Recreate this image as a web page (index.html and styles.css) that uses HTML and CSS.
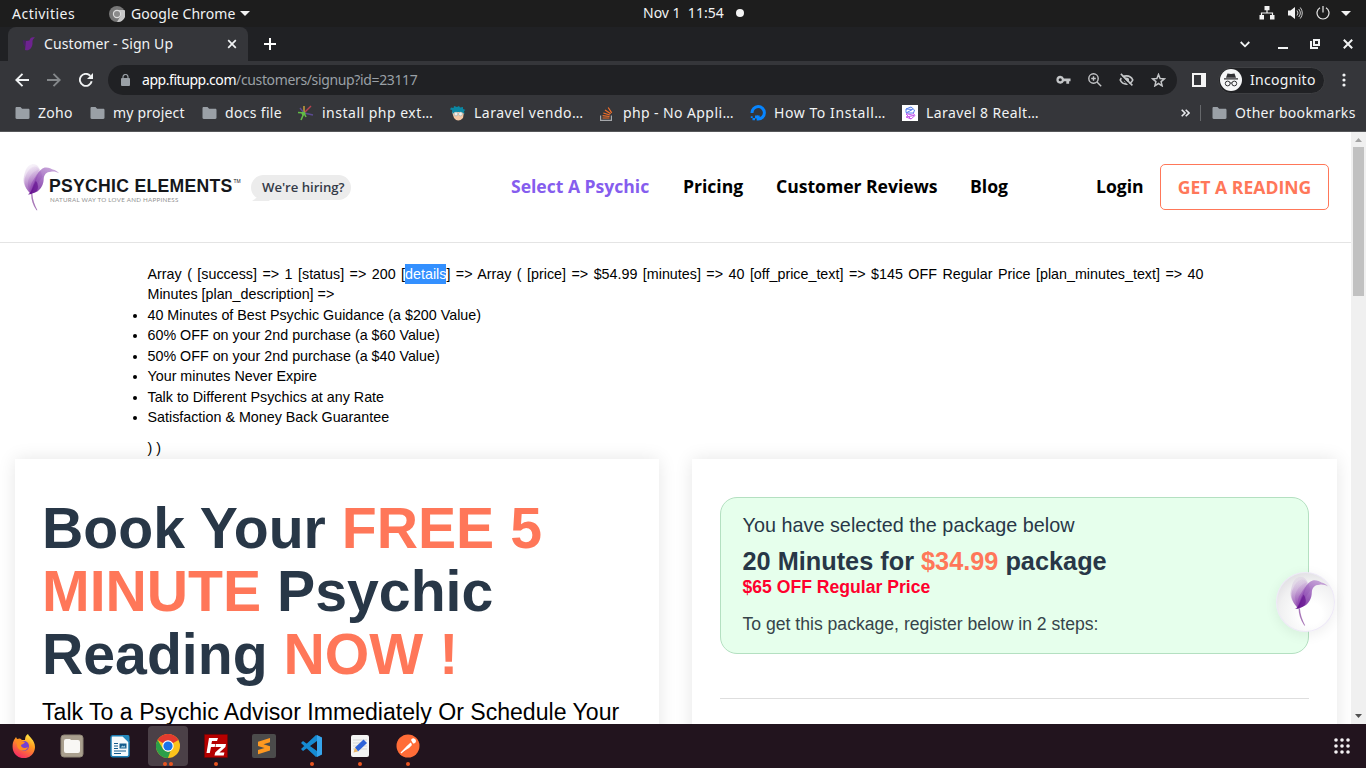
FILE: index.html
```html
<!DOCTYPE html>
<html lang="en">
<head>
<meta charset="utf-8">
<title>Customer - Sign Up</title>
<link rel="stylesheet" href="styles.css">
</head>
<body>
<svg class="defs" width="0" height="0" aria-hidden="true">
  <defs>
    <linearGradient id="violet" x1=".1" y1="1" x2=".7" y2="0"><stop offset="0" stop-color="#64108f"/><stop offset=".5" stop-color="#9150b5"/><stop offset="1" stop-color="#bd94d2"/></linearGradient>
    <linearGradient id="wing" x1=".6" y1="1" x2=".4" y2="0"><stop offset="0" stop-color="#7a24a0" stop-opacity=".6"/><stop offset="1" stop-color="#b78acb" stop-opacity=".08"/></linearGradient>
    <symbol id="folder" viewBox="0 0 14 12"><path d="M0 1.200C0 .5.5 0 1.200 0H5l1.600 1.700h6.200c.7 0 1.200.5 1.200 1.200v7.900c0 .7-.5 1.200-1.200 1.200H1.200C.5 12 0 11.500 0 10.800z" fill="#9aa0a6"/></symbol>
    <symbol id="bird" viewBox="150 52 118 153">
      <path d="M176 150C160 135 150 118 152 100 155 80 160 58 178 54c14-3 22 8 26 18z" fill="url(#wing)"/>
      <path d="M176 150C158 134 152 114 156 98c6-18 14-32 28-36 10-2 16 6 20 12z" fill="url(#wing)"/>
      <path d="M176 150C166 132 162 114 168 102c6-14 16-26 32-30z" fill="url(#wing)"/>
      <path d="M174 151C172 132 174 116 182 106c8-12 14-24 24-32l6 20z" fill="#8939ae" opacity=".4"/>
      <path d="M165 151C176 147 178 132 184 116 192 96 199 71 219 65 230 63 240 68 245 71 253 73 261 77 265 83 256 78 247 76 239 78 224 78 217 88 216 101 216 118 207 136 190 144 182 148 174 151 165 151z" fill="url(#violet)" opacity=".85"/>
      <path d="M170 151c10-12 13-30 21-44 9 12 10 29-2 37z" fill="#64108f" opacity=".65"/>
      <path d="M176 149c0 18 5 34 17 52l3 0c-9-18-15-33-16-52z" fill="#a878b8"/>
    </symbol>
  </defs>
</svg>
<div class="desktop">
  <header class="topbar">
    <span class="u activities">Activities</span>
    <svg class="top-chrome" width="16" height="16" viewBox="0 0 16 16"><circle cx="8" cy="8" r="8" fill="#777"/><path d="M8 4h7.500A8 8 0 0 1 8 16l3.500-6z" fill="#c7c7c7"/><circle cx="8" cy="8" r="4.200" fill="#ddd"/><circle cx="8" cy="8" r="3" fill="#8b8b8b"/></svg>
    <span class="u appname">Google Chrome</span>
    <svg class="app-caret" width="10" height="5" viewBox="0 0 10 5"><path d="M0 0h10L5 5z" fill="#f2f2f2"/></svg>
    <span class="u clock">Nov 1&nbsp; 11:54</span>
    <i class="notice-dot"></i>
    <div class="tray">
      <svg width="16" height="14" viewBox="0 0 16 14"><path d="M5.500 0h5v4.200h-5zM.500 9h4.500v4.500H.500zM11 9h4.500v4.500H11z" fill="#f2f2f2"/><path d="M8 4v3M2.500 9V7h11v2" fill="none" stroke="#f2f2f2" stroke-width="1.200"/></svg>
      <svg class="sound" width="16" height="14" viewBox="0 0 16 14"><path d="M0 4.500h2.500L7 1v12L2.500 9.500H0z" fill="#f2f2f2"/><path d="M9 4.500q2 2.500 0 5M10.700 3q3.300 4 0 8M12.300 1.500q4 5.500 0 11" fill="none" stroke="#ccc" stroke-width="1"/></svg>
      <svg class="power" width="14" height="14" viewBox="0 0 14 14"><path d="M4 1.800a6 6 0 1 0 6 0M7 0v6.500" fill="none" stroke="#e8e8e8" stroke-width="1.200"/></svg>
      <svg class="tray-caret" width="10" height="5" viewBox="0 0 10 5"><path d="M0 0h10L5 5z" fill="#f2f2f2"/></svg>
    </div>
  </header>

  <nav class="tabstrip">
    <div class="tab">
      <svg class="favicon" width="14" height="16" viewBox="0 0 14 16"><path d="M1 4l5 1-1.500 7C1.500 10 .5 7 1 4z" fill="#47235f"/><path d="M13 1.500C9.500.5 8 2 7.500 4.500L4 5l-1 9c4 1.500 7-2 7.500-6 0-3-.5-4.500 2.500-6.500z" fill="#6d238f"/></svg>
      <span class="u tab-title">Customer - Sign Up</span>
      <svg class="tab-close" width="10" height="10" viewBox="0 0 10 10"><path d="M1.200 1.200l7.600 7.600m0-7.600L1.200 8.800" stroke="#f1f3f4" stroke-width="1.700"/></svg>
    </div>
    <svg class="new-tab" width="12" height="12" viewBox="0 0 12 12"><path d="M6 0v12M0 6h12" stroke="#fff" stroke-width="2"/></svg>
    <div class="window-buttons">
      <svg width="10" height="7" viewBox="0 0 10 7"><path d="M.7 1L5 5.300 9.300 1" fill="none" stroke="#f1f3f4" stroke-width="1.800"/></svg>
      <svg width="10" height="10" viewBox="0 0 10 10"><path d="M0 9h10" stroke="#f1f3f4" stroke-width="2"/></svg>
      <svg width="10" height="10" viewBox="0 0 10 10"><path d="M4 1h5v5H4zM1 2v7h7" fill="none" stroke="#f1f3f4" stroke-width="2"/></svg>
      <svg width="10" height="10" viewBox="0 0 10 10"><path d="M.8.8l8.400 8.400m0-8.400L.8 9.200" stroke="#f1f3f4" stroke-width="2"/></svg>
    </div>
  </nav>

  <div class="toolbar">
    <div class="nav-icons">
      <svg width="14" height="14" viewBox="0 0 14 14"><path d="M14 7H1.500M7.500.800L1.300 7l6.200 6.200" fill="none" stroke="#f1f3f4" stroke-width="1.900"/></svg>
      <svg width="14" height="14" viewBox="0 0 14 14"><path d="M0 7h12.500M6.500.800L12.700 7l-6.200 6.200" fill="none" stroke="#85888b" stroke-width="1.900"/></svg>
      <svg width="14" height="14" viewBox="0 0 14 14"><path d="M12.700 8.300A6 6 0 1 1 11.300 2.800" fill="none" stroke="#f1f3f4" stroke-width="1.900"/><path d="M14 0v6H8z" fill="#f1f3f4"/></svg>
    </div>
    <div class="omnibox">
      <svg width="9" height="12" viewBox="0 0 9 12"><rect y="4" width="9" height="8" rx="1" fill="#9aa0a6"/><path d="M2 5V3a2.500 2.500 0 0 1 5 0v2" fill="none" stroke="#9aa0a6" stroke-width="1.200"/></svg>
      <span class="u url"><b>app.fitupp.com</b>/customers/signup?id=23117</span>
      <div class="omni-icons">
        <svg width="15" height="10" viewBox="0 0 16 10"><path fill-rule="evenodd" d="M4.500.500a4.200 4.200 0 0 1 4 2.800H15.500v3h-1.500V9h-3V6.300h-2.500a4.200 4.200 0 1 1-4-5.800zM4.500 3a1.700 1.700 0 1 0 0 3.400 1.700 1.700 0 0 0 0-3.400z" fill="#c4c6c8"/></svg>
        <svg width="14" height="14" viewBox="0 0 14 14"><path d="M9 9l4.200 4.200M5.500 3.200v4.600M3.200 5.500h4.600" stroke="#c4c6c8" stroke-width="1.400"/><circle cx="5.500" cy="5.500" r="4.700" fill="none" stroke="#c4c6c8" stroke-width="1.400"/></svg>
        <svg width="15" height="14" viewBox="0 0 16 14"><path d="M1.300 7C4 1.200 12 1.200 14.700 7 12 12.800 4 12.800 1.300 7z" fill="none" stroke="#c4c6c8" stroke-width="1.800"/><circle cx="8" cy="7" r="2.800" fill="#c4c6c8"/><path d="M1 2L13 14" stroke="#202124" stroke-width="2"/><path d="M2 .500L14.300 12.800" stroke="#c4c6c8" stroke-width="1.700"/></svg>
        <svg width="15" height="14" viewBox="0 0 15 14"><path d="M7.500 1.500l1.600 4 4.300.300-3.300 2.800 1 4.200-3.600-2.300-3.600 2.300 1-4.200L1.600 5.800l4.300-.3z" fill="none" stroke="#c4c6c8" stroke-width="1.500"/></svg>
      </div>
    </div>
    <svg class="sidepanel" width="14" height="14" viewBox="0 0 14 14"><path d="M0 0h14v14H0zM2 2v10h7V2z" fill="#f5f5f5" fill-rule="evenodd"/></svg>
    <div class="incognito">
      <svg width="22" height="22" viewBox="0 0 22 22"><circle cx="11" cy="11" r="11" fill="#f5f6f7"/><path d="M4 10.500h14v-1.200H4zM6 8.800l1.500-4.300 3.500.6 3.500-.6L16 8.800z" fill="#303134"/><circle cx="7.700" cy="14.500" r="2.400" fill="none" stroke="#303134"/><circle cx="14.300" cy="14.500" r="2.400" fill="none" stroke="#303134"/><path d="M10 14.200q1-.7 2 0" stroke="#303134" fill="none"/></svg>
      <span class="u">Incognito</span>
    </div>
    <svg class="menu" width="4" height="14" viewBox="0 0 4 14"><g fill="#f1f3f4"><circle cx="2" cy="2" r="1.600"/><circle cx="2" cy="7" r="1.600"/><circle cx="2" cy="12" r="1.600"/></g></svg>
  </div>

  <div class="bookmarks">
    <span class="bm b1"><svg width="15" height="12"><use href="#folder"/></svg><span class="u">Zoho</span></span>
    <span class="bm b2"><svg width="15" height="12"><use href="#folder"/></svg><span class="u">my project</span></span>
    <span class="bm b3"><svg width="15" height="12"><use href="#folder"/></svg><span class="u">docs file</span></span>
    <span class="bm cut b4"><svg width="17" height="16" viewBox="0 0 17 16"><path d="M7 8l7-7" stroke="#b8434f" stroke-width="1.500"/><path d="M7 7V1" stroke="#c9a23c" stroke-width="1.500"/><path d="M7 8l9 2M7 8L3 3" stroke="#5b4a90" stroke-width="1.500"/><path d="M8 8L1 7.500M7 8l-3 7M7 8l2 4" stroke="#62bb46" stroke-width="1.600"/><circle cx="6.500" cy="8.500" r="2" fill="#62bb46"/></svg><span class="u">install php ext…</span></span>
    <span class="bm cut b5"><svg width="16" height="16" viewBox="0 0 16 16"><path d="M2 7q6-3 12 0l-1 6q-5 5-9 0z" fill="#f5c8a5"/><path d="M1 2.500l2.500.5L4 1l3 1 2-1 1 1.500L13 2v2l2.500 1-1.500 1 .500 3-3-2-6.500 0L2.500 9 2 5 0 4.500z" fill="#0b87a3"/><circle cx="6" cy="9" r="1.900" fill="#edf0ed" stroke="#8da0a3" stroke-width=".5"/><circle cx="10.500" cy="9" r="1.900" fill="#edf0ed" stroke="#8da0a3" stroke-width=".5"/></svg><span class="u">Laravel vendo…</span></span>
    <span class="bm cut b6"><svg width="13" height="15" viewBox="0 0 13 15"><path d="M.600 9.500v4.800h10.800V9.500" fill="none" stroke="#a6a8ab" stroke-width="1.200"/><path d="M2.500 12h7M2.600 9.600l6.900.9M3.300 7l6.600 2M5 4l5.700 3.800M8.200 1.500l3.500 5.300" stroke="#f3702a" stroke-width="1.200"/></svg><span class="u">php - No Appli…</span></span>
    <span class="bm cut b7"><svg width="16" height="16" viewBox="0 0 16 16"><path d="M2 8a6.200 6.200 0 1 1 6.200 6V10.500" fill="none" stroke="#0785ff" stroke-width="3"/><path d="M5 10.500h3v3H5zM2.500 13H5v2.300H2.500zM.800 11.200h1.900V13H.800z" fill="#0785ff"/></svg><span class="u">How To Install…</span></span>
    <span class="bm cut b8"><svg width="16" height="16" viewBox="0 0 16 16"><path fill="#fff" d="M0 0h16v16H0z"/><path d="M4 4l5-2 3.500 3-1 3H4l6.500-3.500L4 4v3.500" fill="none" stroke="#557cee"/><path d="M11 8l2 2.500L9 14l-5-2 8-1.500L6 9H4l5 5" fill="none" stroke="#c555ec"/></svg><span class="u">Laravel 8 Realt…</span></span>
    <svg class="more" width="9" height="8" viewBox="0 0 9 8"><path d="M.7.800L4 4 .7 7.200M4.700.800L8 4 4.700 7.200" fill="none" stroke="#e8eaed" stroke-width="1.600"/></svg>
    <i class="divider"></i>
    <span class="bm b9"><svg width="15" height="12"><use href="#folder"/></svg><span class="u">Other bookmarks</span></span>
  </div>

  <div class="viewport">
    <main class="page">
      <header class="site-header">
        <div class="logo">
          <svg width="37" height="49"><use href="#bird"/></svg>
          <div class="logo-words">
            <div class="brand"><span>PSYCHIC ELEMENTS</span><sup>TM</sup></div>
            <div class="tagline">NATURAL WAY TO LOVE AND HAPPINESS</div>
          </div>
        </div>
        <a class="hiring">We're hiring?</a>
        <a class="link l1">Select A Psychic</a>
        <a class="link l2">Pricing</a>
        <a class="link l3">Customer Reviews</a>
        <a class="link l4">Blog</a>
        <a class="link l5">Login</a>
        <a class="cta">GET A READING</a>
      </header>
      <section class="dump">
        <p>Array ( [success] =&gt; 1 [status] =&gt; 200 [<mark>details</mark>] =&gt; Array ( [price] =&gt; $54.99 [minutes] =&gt; 40 [off_price_text] =&gt; $145 OFF Regular Price [plan_minutes_text] =&gt; 40 Minutes [plan_description] =&gt;</p>
        <ul>
          <li>40 Minutes of Best Psychic Guidance (a $200 Value)</li>
          <li>60% OFF on your 2nd purchase (a $60 Value)</li>
          <li>50% OFF on your 2nd purchase (a $40 Value)</li>
          <li>Your minutes Never Expire</li>
          <li>Talk to Different Psychics at any Rate</li>
          <li>Satisfaction &amp; Money Back Guarantee</li>
        </ul>
        <p>) )</p>
      </section>
      <div class="panels">
        <section class="panel intro">
          <h1>Book Your <em>FREE 5 MINUTE</em> Psychic Reading <em>NOW !</em></h1>
          <p>Talk To a Psychic Advisor Immediately Or Schedule Your</p>
        </section>
        <section class="panel signup">
          <div class="package">
            <p class="selected">You have selected the package below</p>
            <h2>20 Minutes for <em>$34.99</em> package</h2>
            <p class="discount">$65 OFF Regular Price</p>
            <p class="steps">To get this package, register below in 2 steps:</p>
          </div>
          <hr>
        </section>
      </div>
      <div class="chat"><svg width="39" height="51"><use href="#bird"/></svg></div>
    </main>
    <div class="scrollbar">
      <svg width="7" height="4" viewBox="0 0 7 4"><path d="M3.500 0L7 4H0z" fill="#a3a3a3"/></svg>
      <i class="thumb"></i>
      <svg class="down" width="7" height="4" viewBox="0 0 7 4"><path d="M0 0h7L3.500 4z" fill="#505050"/></svg>
    </div>
  </div>

  <footer class="dock">
    <div class="app"><svg width="24" height="24" viewBox="0 0 24 24"><defs><linearGradient id="fox" x1=".8" y1="0" x2=".3" y2="1"><stop offset="0" stop-color="#fff34a"/><stop offset=".4" stop-color="#ff9a20"/><stop offset="1" stop-color="#f52667"/></linearGradient></defs><path d="M2 6l2-3 1 2 3-.5L10 6l3 0c0-3 1-5 3-6 1 3 7 6 7 13a11.200 11.200 0 0 1-22.400 0C.5 10 1 8 2 6z" fill="url(#fox)"/><circle cx="12" cy="12" r="5" fill="#7540d4"/><path d="M4 6c3-2 5-1 6 1l3 1c-1 2-3 2-4 3 0 3 4 4 7 2-2 6-11 4-11-2z" fill="#ff8c22"/></svg></div>
    <div class="app"><svg width="24" height="24" viewBox="0 0 24 24"><rect x="1" y="1" width="22" height="22" rx="3" fill="#aaa08f" stroke="#8f8676"/><path d="M4 7q0-2 2-2h4l1 1h7q2 0 2 2v9q0 2-2 2H6q-2 0-2-2z" fill="#f8f7f4"/></svg></div>
    <div class="app"><svg width="24" height="24" viewBox="0 0 24 24"><path d="M4.500 1.700h10.500l6 6v13q0 2-2 2H5q-2 0-2-2V3.500q0-1.800 1.500-1.800z" fill="#f6fafc" stroke="#1d7fb5" stroke-width="1.500"/><path d="M13.500 1h6.500q1.500 0 1.500 2v6z" fill="#2489bd"/><path d="M6 9.500h4M6 12h4M6 14.500h4M6 17h12M6 19.500h7" stroke="#155c8d" stroke-width="1.100"/><path d="M11.500 9.500h7v5h-7z" fill="#155c8d"/><path d="M12.500 13.500l2-2 1 1 1-1 1 2z" fill="#a8d2e6"/></svg></div>
    <div class="app active"><svg width="24" height="24" viewBox="0 0 24 24"><circle cx="12" cy="12" r="12" fill="#fbc21b"/><path d="M12 12L1.600 6A12 12 0 0 1 22.400 6z" fill="#e33b2e"/><path d="M12 24A12 12 0 0 1 1.600 6L7 15l5 3 2.500-1z" fill="#2b9f49"/><circle cx="12" cy="12" r="5.700" fill="#fff"/><circle cx="12" cy="12" r="4.600" fill="#1a73e8"/></svg><i></i><i></i></div>
    <div class="app"><svg width="24" height="24" viewBox="0 0 24 24"><rect x=".5" y=".5" width="23" height="23" fill="#b50000" stroke="#730000" stroke-dasharray="1 1"/><path d="M5 4h9l-1 3H8l-.6 3h4l-.7 3H7l-1.200 6H2.500zM12 10h10l-.6 3-6 5.500h5l-.7 3H10.500l.7-3 6-5.500h-5.800z" fill="#fff"/></svg><i></i></div>
    <div class="app"><svg width="24" height="24" viewBox="0 0 24 24"><rect width="24" height="24" rx="2" fill="#4b4b4b"/><path d="M6 7.700l12-3.700v4.300l-6.500 2 6.500 2v4.200L6 20.200v-4.300l6.500-2-6.500-2z" fill="#ff9820"/></svg></div>
    <div class="app"><svg width="24" height="24" viewBox="0 0 24 24"><path d="M16 1l6 3v16l-6 3L1 9l2-2 14 10V7L3 17l-2-2z" fill="#168bd2"/><path d="M17 1l5 2.500v17L17 23z" fill="#36a5ed"/></svg><i></i></div>
    <div class="app"><svg width="24" height="24" viewBox="0 0 24 24"><rect x="3" y="1" width="18" height="22" rx="2" fill="#f4f4f4"/><path d="M5 6h14M5 9h14M5 12h14M5 15h14" stroke="#d5d5d5"/><path d="M15.500 5.500l3.500 3.500-9 8.500-3-4z" fill="#2e62d9"/><path d="M7 13.500l3 4-4.500 1z" fill="#e8b66b"/></svg><i></i></div>
    <div class="app"><svg width="24" height="24" viewBox="0 0 24 24"><circle cx="12" cy="12" r="11.500" fill="#ff6c37"/><path d="M5 19l6-7 4-3 1 2-3 3zM15 6a2.600 2.600 0 1 1 2 3.500z" fill="#fff"/><path d="M5 19l10-10" stroke="#fff" stroke-width="1.300"/></svg><i></i></div>
    <svg class="grid" width="16" height="16" viewBox="0 0 16 16"><g fill="#f5f2f4"><circle cx="2" cy="2" r="1.800"/><circle cx="8" cy="2" r="1.800"/><circle cx="14" cy="2" r="1.800"/><circle cx="2" cy="8" r="1.800"/><circle cx="8" cy="8" r="1.800"/><circle cx="14" cy="8" r="1.800"/><circle cx="2" cy="14" r="1.800"/><circle cx="8" cy="14" r="1.800"/><circle cx="14" cy="14" r="1.800"/></g></svg>
  </footer>
</div>
</body>
</html>
```

FILE: styles.css
```css
* { box-sizing: border-box; }
body { margin: 0; width: 1366px; height: 768px; overflow: hidden; font-family: "Liberation Sans", Arial, sans-serif; }
svg { display: block; flex: none; }
p, h1, h2, ul { margin: 0; }
em { font-style: normal; color: #ff7759; }
.defs { position: absolute; }
.desktop { display: flex; flex-direction: column; height: 768px; }
.u { font-family: "Noto Sans", sans-serif; font-size: 14px; line-height: 20px; white-space: nowrap; color: #f1f3f4; }

.topbar { height: 27px; background: #1d1d1d; display: flex; align-items: center; padding: 0 15px 0 12px; }
.activities { width: 97px; letter-spacing: .48px; }
.appname { margin-left: 6px; width: 109px; letter-spacing: .08px; }
.clock { margin-left: 393px; width: 93px; margin-top: -2px; }
.notice-dot { width: 8px; height: 8px; border-radius: 50%; background: #f5f5f5; margin-top: -1px; }
.tray { margin-left: auto; display: flex; align-items: center; margin-top: -1px; }
.sound { margin-left: 13px; }
.power { margin-left: 12px; }
.tray-caret { margin-left: 11px; }

.tabstrip { height: 34px; background: #202124; display: flex; align-items: center; padding: 0 13px 0 8px; }
.tab { width: 240px; height: 34px; background: #35363a; border-radius: 8px 8px 0 0; display: flex; align-items: center; padding: 0 11px 0 14px; }
.tab-title { margin-left: 8px; letter-spacing: .1px; }
.tab-close { margin-left: auto; }
.new-tab { margin-left: 16px; }
.window-buttons { margin-left: auto; display: flex; align-items: center; gap: 22px; }
.window-buttons svg:first-child { margin-right: 6px; }
.window-buttons svg:last-child { margin-left: 1px; }

.toolbar { height: 38px; background: #35363a; display: flex; align-items: center; padding: 0 20px 0 15px; }
.nav-icons { display: flex; gap: 18px; width: 93px; }
.omnibox { width: 1069px; height: 30px; border-radius: 15px; background: #202124; display: flex; align-items: center; padding: 0 11px 0 13px; }
.url { margin-left: 12px; color: #9aa0a6; letter-spacing: -.36px; }
.url b { font-weight: 400; color: #fff; letter-spacing: -.44px; }
.omni-icons { margin-left: auto; display: flex; align-items: center; gap: 17px; }
.sidepanel { margin-left: 15px; }
.incognito { margin-left: 12px; width: 107px; height: 27px; border-radius: 14px; background: #202124; border: 1px solid #3e3f42; display: flex; align-items: center; padding-left: 1px; gap: 8px; letter-spacing: .3px; }
.menu { margin-left: auto; }

.bookmarks { height: 33px; background: #35363a; border-bottom: 1px solid #56575a; display: flex; align-items: center; padding: 0 10px 4px 15px; }
.bm { display: flex; align-items: center; gap: 8px; letter-spacing: .32px; }
.cut { letter-spacing: .5px; }
.b1 { width: 75px; } .b2 { width: 112px; letter-spacing: .2px; } .b3 { width: 95px; } .b4 { width: 153px; }
.b5 { width: 150px; } .b6 { width: 150px; gap: 10px; letter-spacing: .4px; } .b7 { width: 152px; letter-spacing: .57px; } .b8 { width: 279px; letter-spacing: .4px; }
.divider { width: 1px; height: 16px; background: #66686b; margin: 0 11px 0 10px; }

.viewport { height: 592px; display: flex; background: #fff; }
.page { width: 1351px; height: 592px; overflow: hidden; position: relative; background: #fff; }
.site-header { height: 111px; border-bottom: 1px solid #e4e4e4; display: flex; align-items: center; padding: 0 22px 0 23px; font-family: "Open Sans", sans-serif; }
.logo { width: 228px; display: flex; align-items: center; }
.logo-words { margin-left: -11px; white-space: nowrap; padding-top: 8px; }
.brand { display: flex; font: bold 17.600px/17px "Liberation Sans", Arial, sans-serif; letter-spacing: .29px; color: #16171b; }
.brand sup { font-size: 5px; line-height: 6px; font-weight: 400; margin-left: 1px; letter-spacing: 0; }
.tagline { font: 6.200px/9px Lato, sans-serif; letter-spacing: .28px; color: #929292; padding-left: 1px; }
.hiring { width: 100px; height: 25px; border-radius: 13px; background: #ececec; color: #343b48; font-size: 13.200px; font-weight: 600; line-height: 25px; padding-left: 11px; white-space: nowrap; letter-spacing: -.05px; position: relative; }
.hiring::after { content: ""; position: absolute; left: 1px; bottom: -1px; border-left: 10px solid transparent; border-bottom: 7px solid #ececec; border-right: 8px solid transparent; z-index: -1; }
.hiring, .logo { z-index: 0; }
.link { font-size: 17.600px; font-weight: 700; color: #000; white-space: nowrap; line-height: 24px; padding-bottom: 2px; letter-spacing: -.03px; }
.l1 { color: #855dee; margin-left: 160px; width: 172px; }
.l2 { width: 93px; } .l3 { width: 194px; } .l4 { width: 126px; } .l5 { width: 64px; }
.cta { width: 169px; height: 46px; border: 1px solid #ff7759; border-radius: 5px; color: #ff7759; font-size: 17.600px; font-weight: 700; line-height: 44px; text-align: center; white-space: nowrap; }

.dump { margin: 21px 147.500px 0; height: 195px; font-size: 14.300px; line-height: 20.430px; color: #000; text-align: justify; }
.dump mark { background: #3390ff; color: #fff; padding: 2px 0; }
.dump ul { padding: 0; margin-bottom: 10px; }
.panels { display: flex; gap: 33px; padding-left: 15px; }
.panel { height: 500px; background: #fff; box-shadow: 0 0 17px rgba(0,0,0,.1); }
.intro { width: 644px; padding: 38px 27px; }
.intro h1 { font-size: 57.200px; line-height: 62.920px; color: #283747; }
.intro p { font-size: 23.100px; line-height: 33px; color: #000; margin-top: 10px; white-space: nowrap; }
.signup { width: 645px; padding: 38px 28px; }
.package { height: 157px; border: 1px solid #b4e0c1; border-radius: 17px; background: #e6ffec; padding: 13px 21.500px; color: #283747; }
.package p { white-space: nowrap; }
.package .selected { font-size: 19.800px; line-height: 28px; letter-spacing: .02px; }
.package h2 { font-size: 25.300px; line-height: 28px; margin-top: 8px; }
.package .discount { font-size: 17.600px; line-height: 24px; font-weight: 700; color: #ff002d; }
.package .steps { font-size: 17.600px; line-height: 25px; margin-top: 13px; color: #36444a; }
hr { border: 0; border-top: 1px solid #dedede; margin: 44px 0 0; }
.chat { position: absolute; left: 1276px; top: 440px; width: 59px; height: 60px; border-radius: 50%; background: radial-gradient(circle at 60% 70%, #fff 20%, #f0f0f1 60%, #dedce1 85%); border: 1px solid #eee9f7; box-shadow: 0 3px 13px rgba(0,0,0,.07); display: flex; align-items: center; justify-content: center; padding-left: 7px; padding-bottom: 2px; }
.scrollbar { width: 15px; background: #f0f0f0; display: flex; flex-direction: column; align-items: center; padding: 6px 0; }
.thumb { width: 11px; height: 149px; background: #c1c1c1; margin-top: 5px; }
.down { margin-top: auto; }

.dock { height: 44px; background: #22141e; display: flex; align-items: flex-start; gap: 8px; padding: 2px 16px 0 4px; }
.app { width: 40px; height: 40px; border-radius: 4px; display: flex; flex-wrap: wrap; justify-content: center; align-content: flex-start; padding: 8px 6px 0; column-gap: 2px; }
.active { background: #4b4047; }
.app svg { margin: 0 2px; }
.app i { width: 4px; height: 4px; border-radius: 50%; background: #e95420; margin-top: 4px; }
.grid { margin: 12px 0 0 auto; }
```
